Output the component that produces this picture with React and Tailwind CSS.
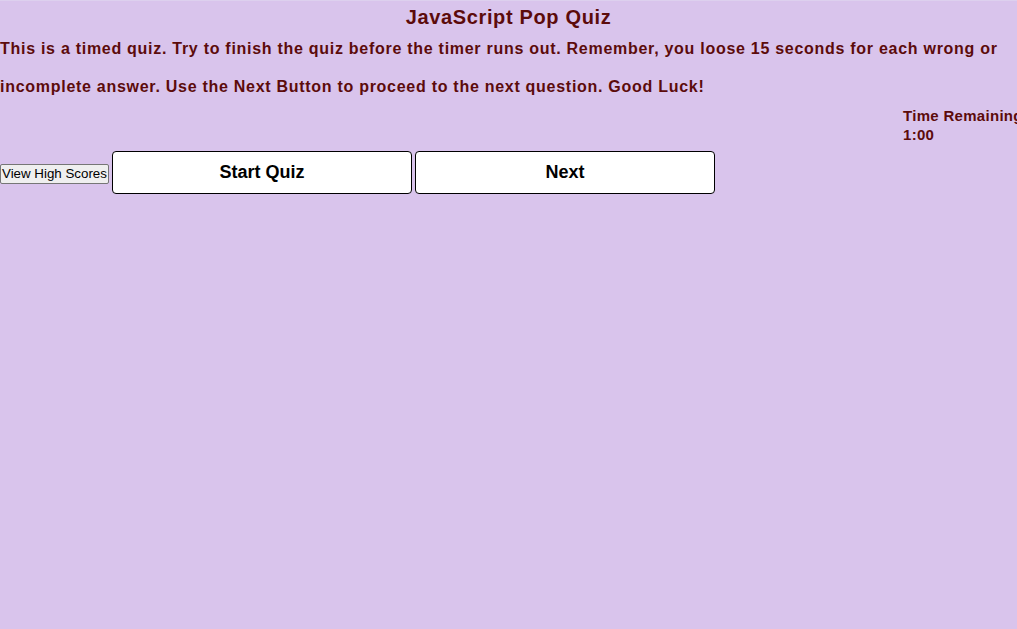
export default function App() {
  return (
    <div className="min-h-[629px] w-[1017px] overflow-hidden bg-[#d9c4ec] border-t border-[#ddd0ee] text-[#5c0b0b] font-['Liberation_Sans',Arial,sans-serif]">
      <h1 className="text-center text-[20px] font-bold leading-[24px] mt-[4px] tracking-[0.65px]">JavaScript Pop Quiz</h1>
      <p className="text-[16px] font-bold leading-[38px] mt-[1px] pr-[10px] tracking-[0.72px]">
        This is a timed quiz. Try to finish the quiz before the timer runs out. Remember, you loose 15 seconds for each wrong or incomplete answer. Use the Next Button to proceed to the next question. Good Luck!
      </p>
      <div className="pl-[903px] whitespace-nowrap text-[15px] font-bold leading-[19px] tracking-[0.3px]">
        <div>Time Remaining</div>
        <div>1:00</div>
      </div>
      <div className="flex items-baseline gap-[3px] mt-[7px]">
        <button className="text-[13.33px] leading-[16px] text-black bg-[#efefef] border border-[#767676] rounded-[2px] px-[1px] py-[1px] font-['Liberation_Sans',Arial,sans-serif]">
          View High Scores
        </button>
        <button className="w-[300px] h-[43px] bg-white border border-black rounded-[4px] text-black text-[18px] font-bold">Start Quiz</button>
        <button className="w-[300px] h-[43px] bg-white border border-black rounded-[4px] text-black text-[18px] font-bold">Next</button>
      </div>
    </div>
  );
}
